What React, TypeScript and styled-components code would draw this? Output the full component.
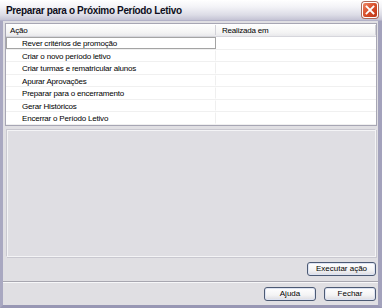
import React from "react"
import styled, { createGlobalStyle } from "styled-components"

const GlobalStyle = createGlobalStyle`
  * {
    box-sizing: border-box;
  }
  body {
    margin: 0;
    background: #ffffff;
    font-family: "Liberation Sans", Arial, sans-serif;
  }
`

const steps = [
  "Rever critérios de promoção",
  "Criar o novo período letivo",
  "Criar turmas e rematricular alunos",
  "Apurar Aprovações",
  "Preparar para o encerramento",
  "Gerar Históricos",
  "Encerrar o Período Letivo",
]

const Window = styled.div`
  width: 382px;
  height: 308px;
  display: flex;
  flex-direction: column;
  overflow: hidden;
`

const TitleBar = styled.div`
  height: 21px;
  flex: none;
  display: flex;
  align-items: center;
  justify-content: space-between;
  padding: 0 4px 0 6px;
  background: linear-gradient(
    to bottom,
    #ffffff 0%,
    #f3f3f7 35%,
    #dcdce6 75%,
    #c4c3d4 100%
  );
  border-bottom: 1px solid #b3b2c8;
`

const Title = styled.span`
  font-size: 10px;
  font-weight: bold;
  letter-spacing: -0.35px;
  color: #0e0e20;
`

const CloseButton = styled.div`
  width: 16px;
  height: 16px;
  border-radius: 3px;
  border: 1px solid #ffffff;
  box-shadow: 0 0 0 1px #b06a5a;
  background: linear-gradient(135deg, #ee8a6a 0%, #d9512d 45%, #bd3517 100%);
  display: flex;
  align-items: center;
  justify-content: center;
`

const Frame = styled.div`
  flex: 1;
  display: flex;
  flex-direction: column;
  background: #e0dfe3;
  border-left: 3px solid #a9a8c1;
  border-right: 4px solid #a3a2bc;
  border-bottom: 3px solid #9897b4;
`

const ListView = styled.div`
  margin: 2px 1px 0 2px;
  height: 103px;
  flex: none;
  background: #ffffff;
  border: 1px solid #a7a6b4;
  display: flex;
  flex-direction: column;
`

const HeaderRow = styled.div`
  height: 13px;
  display: flex;
  background: linear-gradient(to bottom, #ffffff 0%, #f4f4f4 70%, #e9e9ec 100%);
  border-bottom: 1px solid #d6d6dc;
`

const HeaderCell = styled.div<{ $w?: number }>`
  width: ${(p) => (p.$w ? `${p.$w}px` : "auto")};
  flex: ${(p) => (p.$w ? "none" : "1")};
  padding-left: ${(p) => (p.$w ? 4 : 6)}px;
  font-size: 8px;
  letter-spacing: -0.2px;
  line-height: 12px;
  color: #000000;
  border-right: 1px solid #d2d2d8;
  margin: 1px 0;
`

const Row = styled.div`
  height: 12.5px;
  display: flex;
  border-bottom: 1px solid #f0f0f0;
`

const Cell = styled.div<{ $focus?: boolean }>`
  width: 210px;
  flex: none;
  padding-left: 15px;
  font-size: 8px;
  letter-spacing: -0.2px;
  line-height: 11px;
  color: #000000;
  white-space: nowrap;
  border: 1px solid ${(p) => (p.$focus ? "#a4a4a4" : "transparent")};
  border-right-color: ${(p) => (p.$focus ? "#a4a4a4" : "#efefef")};
`

const DateCell = styled.div`
  flex: 1;
`

const DetailPanel = styled.div`
  margin: 3px 2px 0 3px;
  height: 128px;
  flex: none;
  border: 1px solid #c9c8d0;
  border-right-color: #f4f4f6;
  border-bottom-color: #f4f4f6;
  box-shadow: inset 1px 1px 0 #f4f4f6, 1px 1px 0 #c9c8d0;
  background: #dfdee3;
`

const ActionRow = styled.div`
  display: flex;
  justify-content: flex-end;
  padding: 5px 2px 0 0;
`

const Separator = styled.div`
  margin-top: 5px;
  height: 2px;
  border-top: 1px solid #a8a7b0;
  border-bottom: 1px solid #f7f7f9;
`

const Footer = styled.div`
  display: flex;
  justify-content: flex-end;
  gap: 8px;
  padding: 4px 2px 0 0;
`

const Button = styled.button<{ $w: number }>`
  width: ${(p) => p.$w}px;
  height: 14px;
  padding: 0;
  font-family: "Liberation Sans", Arial, sans-serif;
  font-size: 8px;
  color: #000000;
  border: 1px solid #4c5a74;
  border-radius: 3px;
  background: linear-gradient(to bottom, #ffffff 0%, #f3f3f4 60%, #dcdce2 100%);
  box-shadow: inset 0 0 0 1px #dde3f2;
  line-height: 12px;
`

export default function App() {
  return (
    <>
      <GlobalStyle />
      <Window>
        <TitleBar>
          <Title>Preparar para o Próximo Período Letivo</Title>
          <CloseButton>
            <svg width="10" height="10" viewBox="0 0 10 10">
              <path
                d="M1.5 1.5 L8.5 8.5 M8.5 1.5 L1.5 8.5"
                stroke="#ffffff"
                strokeWidth="1.8"
                strokeLinecap="square"
              />
            </svg>
          </CloseButton>
        </TitleBar>
        <Frame>
          <ListView>
            <HeaderRow>
              <HeaderCell $w={210}>Ação</HeaderCell>
              <HeaderCell>Realizada em</HeaderCell>
            </HeaderRow>
            {steps.map((s, i) => (
              <Row key={s}>
                <Cell $focus={i === 0}>{s}</Cell>
                <DateCell />
              </Row>
            ))}
          </ListView>
          <DetailPanel />
          <ActionRow>
            <Button $w={69}>Executar ação</Button>
          </ActionRow>
          <Separator />
          <Footer>
            <Button $w={52}>Ajuda</Button>
            <Button $w={52}>Fechar</Button>
          </Footer>
        </Frame>
      </Window>
    </>
  )
}
